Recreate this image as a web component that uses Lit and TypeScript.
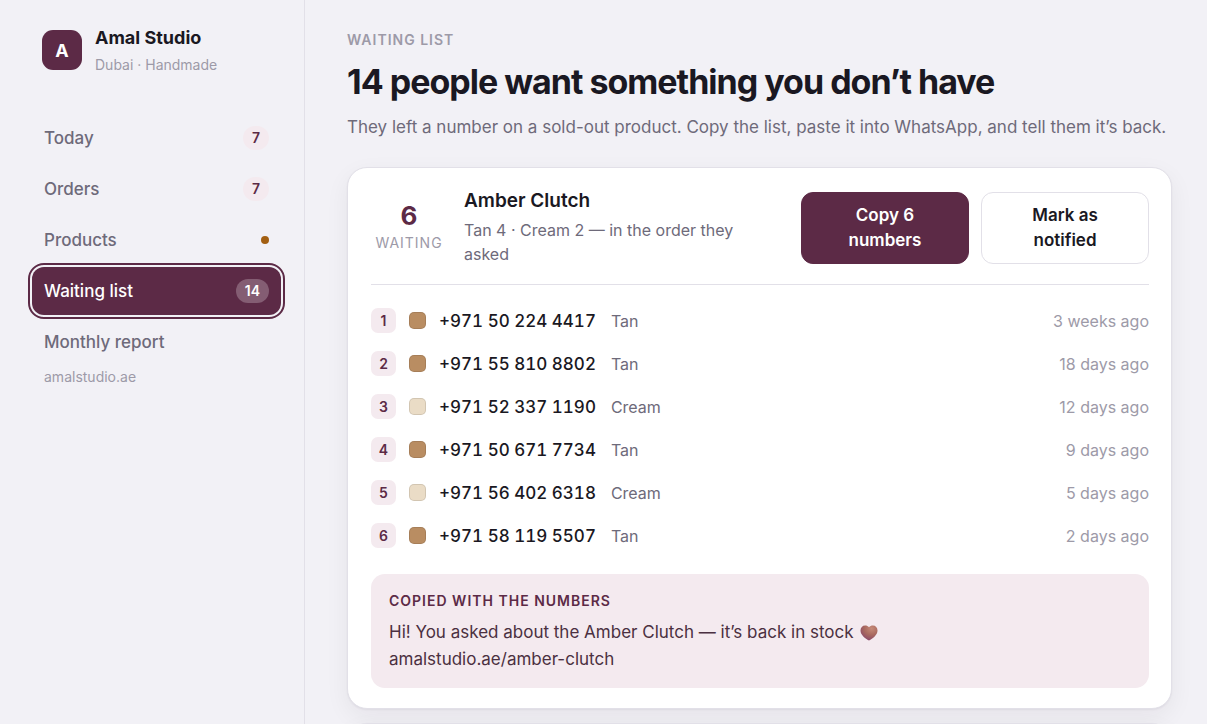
import { LitElement, html, css, nothing } from "lit";
import { customElement, state } from "lit/decorators.js";
import { classMap } from "lit/directives/class-map.js";

interface NavItem {
  id: string;
  label: string;
  count?: number;
  dot?: boolean;
}

interface Person {
  phone: string;
  colour: "Tan" | "Cream";
  when: string;
}

const NAV: NavItem[] = [
  { id: "today", label: "Today", count: 7 },
  { id: "orders", label: "Orders", count: 7 },
  { id: "products", label: "Products", dot: true },
  { id: "waiting", label: "Waiting list", count: 14 },
  { id: "report", label: "Monthly report" },
];

const PEOPLE: Person[] = [
  { phone: "+971 50 224 4417", colour: "Tan", when: "3 weeks ago" },
  { phone: "+971 55 810 8802", colour: "Tan", when: "18 days ago" },
  { phone: "+971 52 337 1190", colour: "Cream", when: "12 days ago" },
  { phone: "+971 50 671 7734", colour: "Tan", when: "9 days ago" },
  { phone: "+971 56 402 6318", colour: "Cream", when: "5 days ago" },
  { phone: "+971 58 119 5507", colour: "Tan", when: "2 days ago" },
];

@customElement("studio-sidebar")
export class StudioSidebar extends LitElement {
  @state() private current = "waiting";

  static styles = css`
    :host {
      display: block;
      box-sizing: border-box;
      padding: 26px 23px 24px 32px;
      border-right: 1px solid #e2e0e8;
    }
    .brand {
      display: flex;
      align-items: flex-start;
      gap: 13px;
      padding-left: 10px;
    }
    .mark {
      display: grid;
      place-items: center;
      width: 40px;
      height: 40px;
      margin-top: 4px;
      border-radius: 11px;
      background: #5c2a46;
      color: #fff;
      font-size: 18px;
      font-weight: 700;
    }
    .name {
      font-size: 18px;
      line-height: 24px;
      font-weight: 700;
      color: #1a1822;
    }
    .place {
      margin-top: 5px;
      font-size: 14px;
      line-height: 20px;
      color: #9d9aa8;
    }
    .nav {
      display: flex;
      flex-direction: column;
      gap: 3px;
      margin-top: 39px;
    }
    .item {
      display: flex;
      align-items: center;
      justify-content: space-between;
      height: 48px;
      padding: 0 12px;
      border-radius: 12px;
      font-size: 17px;
      font-weight: 500;
      color: #6e6a7a;
      text-decoration: none;
    }
    .current {
      background: #5c2a46;
      color: #fff;
      outline: 2px solid #5c2a46;
      outline-offset: 2px;
    }
    .count {
      padding: 0 9px;
      border-radius: 12px;
      background: #f4eaef;
      color: #5c2a46;
      font-size: 14px;
      line-height: 24px;
      font-weight: 600;
    }
    .current .count {
      background: #845d73;
      color: #fff;
    }
    .dot {
      width: 8px;
      height: 8px;
      border-radius: 50%;
      background: #a35f12;
    }
    .site {
      display: inline-block;
      padding-left: 12px;
      font-size: 14px;
      line-height: 20px;
      color: #9d9aa8;
      text-decoration: none;
    }
  `;

  render() {
    return html`
      <div class="brand">
        <div class="mark">A</div>
        <div>
          <div class="name">Amal Studio</div>
          <div class="place">Dubai · Handmade</div>
        </div>
      </div>
      <nav class="nav">
        ${NAV.map(
          (n) => html`<a
            href="#${n.id}"
            class=${classMap({ item: true, current: n.id === this.current })}
            @click=${() => (this.current = n.id)}
          >
            <span>${n.label}</span>
            ${n.count ? html`<span class="count">${n.count}</span>` : nothing}
            ${n.dot ? html`<span class="dot"></span>` : nothing}
          </a>`
        )}
      </nav>
      <a class="site" href="#site">amalstudio.ae</a>
    `;
  }
}

@customElement("waiting-card")
export class WaitingCard extends LitElement {
  static styles = css`
    :host {
      display: block;
    }
    .head {
      display: flex;
      align-items: center;
      gap: 12px;
      padding-bottom: 18px;
      border-bottom: 1px solid #e2e0e8;
    }
    .total {
      flex: none;
      width: 76px;
      margin-right: 5px;
      text-align: center;
    }
    .number {
      font-size: 26px;
      line-height: 30px;
      font-weight: 700;
      color: #5c2a46;
    }
    .unit {
      font-size: 14px;
      line-height: 24px;
      letter-spacing: 1px;
      color: #9d9aa8;
    }
    .about {
      flex: 1;
      min-width: 0;
    }
    .title {
      margin: 0;
      font-size: 19px;
      line-height: 22px;
      font-weight: 600;
      color: #1a1822;
    }
    .detail {
      margin: 6px 0 0;
      max-width: 290px;
      font-size: 16px;
      line-height: 24px;
      color: #6e6a7a;
    }
    .button {
      box-sizing: border-box;
      width: 168px;
      padding: 10px 32px;
      border: 1px solid #e2e0e8;
      border-radius: 12px;
      background: #fff;
      color: #1a1822;
      font: 600 17px/25px Inter, sans-serif;
    }
    .primary {
      border-color: #5c2a46;
      background: #5c2a46;
      color: #fff;
    }
    .people {
      margin: 0;
      padding: 14px 0 17px;
      list-style: none;
    }
    .person {
      display: flex;
      align-items: center;
      height: 43px;
      font-size: 16px;
      color: #6e6a7a;
    }
    .rank {
      width: 25px;
      border-radius: 7px;
      background: #f4eaef;
      color: #5c2a46;
      font-size: 14px;
      line-height: 25px;
      font-weight: 600;
      text-align: center;
    }
    .swatch {
      box-sizing: border-box;
      width: 17px;
      height: 17px;
      margin: 0 13px;
      border: 1px solid rgba(0, 0, 0, 0.1);
      border-radius: 5px;
    }
    .tan {
      background: #b98d62;
    }
    .cream {
      background: #eadcc6;
    }
    .phone {
      margin-right: 15px;
      font-size: 17px;
      font-weight: 500;
      font-variant-numeric: tabular-nums;
      color: #1a1822;
    }
    .when {
      margin-left: auto;
      color: #9d9aa8;
    }
    .message {
      padding: 17px 18px 15px;
      border-radius: 14px;
      background: #f4eaef;
      color: #4b3041;
    }
    .caption {
      font-size: 14px;
      line-height: 20px;
      font-weight: 600;
      letter-spacing: 1px;
      color: #5c2a46;
    }
    .text {
      margin: 8px 0 0;
      font-size: 17px;
      line-height: 27px;
    }
    .heart {
      width: 18px;
      height: 16px;
      margin-left: 2px;
      vertical-align: -3px;
    }
  `;

  render() {
    return html`
      <div class="head">
        <div class="total">
          <div class="number">6</div>
          <div class="unit">WAITING</div>
        </div>
        <div class="about">
          <h2 class="title">Amber Clutch</h2>
          <p class="detail">Tan 4 · Cream 2 — in the order they asked</p>
        </div>
        <button class="button primary">Copy 6 numbers</button>
        <button class="button">Mark as notified</button>
      </div>
      <ol class="people">
        ${PEOPLE.map(
          (p, i) => html`<li class="person">
            <span class="rank">${i + 1}</span>
            <span class="swatch ${p.colour.toLowerCase()}"></span>
            <span class="phone">${p.phone}</span>
            <span>${p.colour}</span>
            <span class="when">${p.when}</span>
          </li>`
        )}
      </ol>
      <div class="message">
        <div class="caption">COPIED WITH THE NUMBERS</div>
        <p class="text">
          Hi! You asked about the Amber Clutch — it’s back in stock
          <svg class="heart" viewBox="0 0 18 16" role="img" aria-label="Brown heart">
            <defs>
              <radialGradient id="g" cx="0.65" cy="0.2" r="0.85">
                <stop offset="0" stop-color="#c68a78" />
                <stop offset="0.5" stop-color="#a9695f" />
                <stop offset="1" stop-color="#88466a" />
              </radialGradient>
            </defs>
            <path
              fill="url(#g)"
              d="M9 2.200C8 1 6.700.5 5.200.5 2.400.5.500 2.500.500 5.500.500 10 5.200 13.500 9 15.500 12.800 13.500 17.500 10 17.500 5.500 17.500 2.500 15.600.5 12.800.5 11.300.5 10 1 9 2.200Z"
            /></svg
          ><br />amalstudio.ae/amber-clutch
        </p>
      </div>
    `;
  }
}

@customElement("app-root")
export class AppRoot extends LitElement {
  static styles = css`
    :host {
      display: grid;
      grid-template-columns: 305px minmax(0, 1fr);
      height: 100vh;
      overflow: hidden;
      background: #f2f1f6;
      font-family: Inter, sans-serif;
      color: #1a1822;
    }
    .main {
      min-height: 0;
      padding: 30px 35px 0 42px;
    }
    .eyebrow {
      font-size: 14px;
      line-height: 20px;
      font-weight: 600;
      letter-spacing: 1px;
      color: #9d9aa8;
    }
    .heading {
      margin: 10px 0 0;
      font-size: 34px;
      line-height: 44px;
      font-weight: 700;
      letter-spacing: -1px;
    }
    .lead {
      margin: 10px 0 26px;
      font-size: 17px;
      line-height: 27px;
      color: #6e6a7a;
    }
    .card {
      margin-bottom: 14px;
      padding: 22px 22px 20px 23px;
      border: 1px solid #e2e0e8;
      border-radius: 20px;
      background: #fff;
      box-shadow: 0 1px 2px rgba(26, 24, 34, 0.05),
        0 8px 24px rgba(26, 24, 34, 0.06);
    }
  `;

  render() {
    return html`
      <studio-sidebar></studio-sidebar>
      <main class="main">
        <div class="eyebrow">WAITING LIST</div>
        <h1 class="heading">14 people want something you don’t have</h1>
        <p class="lead">
          They left a number on a sold-out product. Copy the list, paste it into
          WhatsApp, and tell them it’s back.
        </p>
        <waiting-card class="card"></waiting-card>
        <section class="card"></section>
      </main>
    `;
  }
}
